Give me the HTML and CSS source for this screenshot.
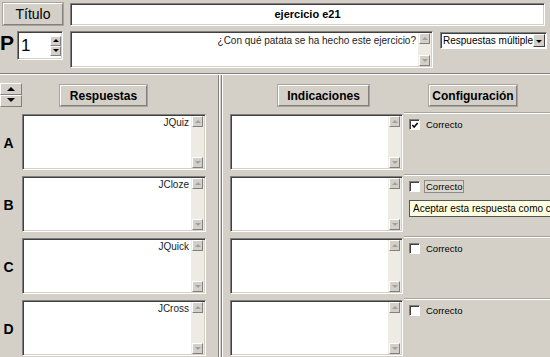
FILE: index.html
```html
<!DOCTYPE html>
<html lang="es">
<head>
	<meta charset="UTF-8">
	<title>Respuestas múltiples</title>
	<link rel="stylesheet" href="styles.css">
</head>
<body>
	<div class="win">
		<div class="top">
			<div class="line">
				<div class="btn btn-titulo">Título</div>
				<div class="field title-field">ejercicio e21</div>
			</div>
			<div class="line line2">
				<span class="plabel">P</span>
				<div class="field spin">
					<span class="spin-val">1</span>
					<span class="spin-btns"><i class="sp sp-up"></i><i class="sp sp-down"></i></span>
				</div>
				<div class="field area question">
					<div class="txt">¿Con qué patata se ha hecho este ejercicio?</div>
					<div class="sbar"><i class="sb sb-up"></i><i class="sb sb-down"></i></div>
				</div>
				<div class="combo">
					<span class="combo-txt">Respuestas múltiples</span>
					<span class="combo-btn"></span>
				</div>
			</div>
		</div>

		<div class="main">
			<div class="updown"><i class="ud ud-up"></i><i class="ud ud-down"></i></div>
			<div class="head"><span class="btn hbtn resp">Respuestas</span></div>
			<div class="divider"></div>
			<div class="head"><span class="btn hbtn indic">Indicaciones</span></div>
			<div class="head"><span class="btn hbtn conf">Configuración</span></div>

			<!-- A -->
			<div class="letter">A</div>
			<div class="field area answer">
				<div class="txt">JQuiz</div>
				<div class="sbar"><i class="sb sb-up"></i><i class="sb sb-down"></i></div>
			</div>
			<div class="field area hint">
				<div class="txt"></div>
				<div class="sbar"><i class="sb sb-up"></i><i class="sb sb-down"></i></div>
			</div>
			<div class="cfg">
				<span class="chk"><svg width="9" height="9" viewBox="0 0 9 9"><path d="M1.5 4 L3.5 6.2 L7.5 1.8" fill="none" stroke="#000" stroke-width="1.7"/></svg></span>
				<span class="chk-label">Correcto</span>
			</div>

			<!-- B -->
			<div class="letter">B</div>
			<div class="field area answer">
				<div class="txt">JCloze</div>
				<div class="sbar"><i class="sb sb-up"></i><i class="sb sb-down"></i></div>
			</div>
			<div class="field area hint">
				<div class="txt"></div>
				<div class="sbar"><i class="sb sb-up"></i><i class="sb sb-down"></i></div>
			</div>
			<div class="cfg">
				<span class="chk"></span>
				<span class="chk-label focus">Correcto</span>
				<div class="tooltip">Aceptar esta respuesta como correcta</div>
			</div>

			<!-- C -->
			<div class="letter">C</div>
			<div class="field area answer">
				<div class="txt">JQuick</div>
				<div class="sbar"><i class="sb sb-up"></i><i class="sb sb-down"></i></div>
			</div>
			<div class="field area hint">
				<div class="txt"></div>
				<div class="sbar"><i class="sb sb-up"></i><i class="sb sb-down"></i></div>
			</div>
			<div class="cfg">
				<span class="chk"></span>
				<span class="chk-label">Correcto</span>
			</div>

			<!-- D -->
			<div class="letter">D</div>
			<div class="field area answer">
				<div class="txt">JCross</div>
				<div class="sbar"><i class="sb sb-up"></i><i class="sb sb-down"></i></div>
			</div>
			<div class="field area hint">
				<div class="txt"></div>
				<div class="sbar"><i class="sb sb-up"></i><i class="sb sb-down"></i></div>
			</div>
			<div class="cfg">
				<span class="chk"></span>
				<span class="chk-label">Correcto</span>
			</div>
		</div>
	</div>
</body>
</html>
```

FILE: styles.css
```css
/* ventana 550 x 357 */
html, body {
	margin: 0;
	padding: 0;
	background: #d4d0c8;
}
.win {
	width: 550px;
	height: 357px;
	overflow: hidden;
	font-family: "Liberation Sans", Arial, sans-serif;
	color: #000;
}

/* piezas comunes */
.btn {
	display: flex;
	align-items: center;
	justify-content: center;
	box-sizing: border-box;
	background: #d4d0c8;
	border: 1px solid;
	border-color: #fff #808080 #808080 #fff;
	box-shadow: 0 0 0 1px #a9a59e;
}
.field {
	box-sizing: border-box;
	background: #fff;
	border: 1px solid;
	border-color: #808080 #fff #fff #808080;
	box-shadow: inset 1px 1px #404040, inset -1px -1px #d4d0c8;
}
.area {
	display: flex;
}
.area .txt {
	flex: 1;
	text-align: right;
	font-size: 10px;
	color: #222;
	padding: 2px 2px 0 0;
	white-space: nowrap;
	overflow: hidden;
}
.sbar {
	width: 13px;
	margin: 1px 1px 1px 0;
	background: #edebe4;
	display: flex;
	flex-direction: column;
	justify-content: space-between;
}
.sb {
	position: relative;
	display: block;
	width: 11px;
	height: 11px;
	margin-left: 1px;
	box-sizing: border-box;
	background: #d4d0c8;
	border: 1px solid;
	border-color: #fff #808080 #808080 #fff;
}
.sb::after {
	content: "";
	position: absolute;
	left: 2px;
	top: 3px;
	border-left: 3px solid transparent;
	border-right: 3px solid transparent;
}
.sb-up::after {
	border-bottom: 3px solid #a0a0a0;
}
.sb-down::after {
	border-top: 3px solid #a0a0a0;
}

/* zona superior */
.top {
	height: 73px;
	border-bottom: 1px solid #808080;
	box-sizing: content-box;
}
.line {
	display: flex;
	padding-top: 3px;
}
.btn-titulo {
	width: 60px;
	height: 22px;
	margin-left: 3px;
	font-size: 14px;
}
.title-field {
	width: 475px;
	height: 23px;
	margin-left: 7px;
	text-align: center;
	font-weight: bold;
	font-size: 11px;
	line-height: 20px;
}
.line2 {
	padding-top: 5px;
	align-items: flex-start;
}
.plabel {
	width: 17px;
	font-weight: bold;
	font-size: 21px;
	line-height: 24px;
}
.spin {
	width: 46px;
	height: 29px;
	display: flex;
	align-items: center;
	justify-content: space-between;
	padding: 0 1px 0 3px;
}
.spin-val {
	font-size: 17px;
	line-height: 20px;
}
.spin-btns {
	display: flex;
	flex-direction: column;
}
.sp {
	position: relative;
	display: block;
	width: 11px;
	height: 10px;
	box-sizing: border-box;
	background: #d4d0c8;
	border: 1px solid;
	border-color: #fff #808080 #808080 #fff;
}
.sp::after {
	content: "";
	position: absolute;
	left: 2px;
	top: 2px;
	border-left: 3px solid transparent;
	border-right: 3px solid transparent;
}
.sp-up::after { border-bottom: 3px solid #000; }
.sp-down::after { border-top: 3px solid #000; }

.question {
	width: 363px;
	height: 37px;
	margin-left: 7px;
}
.question .txt {
	padding-top: 3px;
}
.combo {
	display: flex;
	width: 107px;
	height: 17px;
	margin: 1px 0 0 7px;
	box-sizing: border-box;
	background: #fff;
	border: 1px solid;
	border-color: #808080 #fff #fff #808080;
	box-shadow: inset 1px 1px #404040;
}
.combo-txt {
	flex: 1;
	font-size: 10px;
	line-height: 15px;
	padding-left: 2px;
	overflow: hidden;
	white-space: nowrap;
}
.combo-btn {
	position: relative;
	width: 12px;
	margin: 1px 1px 1px 0;
	box-sizing: border-box;
	background: #d4d0c8;
	border: 1px solid;
	border-color: #fff #404040 #404040 #fff;
}
.combo-btn::after {
	content: "";
	position: absolute;
	left: 2px;
	top: 5px;
	border-left: 3px solid transparent;
	border-right: 3px solid transparent;
	border-top: 3px solid #000;
}

/* zona principal */
.main {
	border-top: 1px solid #fff;
	display: grid;
	grid-template-columns: 22px 196px 5px 181px 146px;
	grid-template-rows: 37px repeat(4, 62px);
}
.updown {
	margin-top: 8px;
	width: 22px;
	display: flex;
	flex-direction: column;
}
.ud {
	position: relative;
	display: block;
	height: 12px;
	box-sizing: border-box;
	background: #d4d0c8;
	border: 1px solid;
	border-color: #fff #808080 #808080 #fff;
}
.ud::after {
	content: "";
	position: absolute;
	left: 6px;
	top: 3px;
	border-left: 4px solid transparent;
	border-right: 4px solid transparent;
}
.ud-up::after { border-bottom: 4px solid #000; }
.ud-down::after { border-top: 4px solid #000; top: 2px; }

.head {
	padding-top: 10px;
	display: flex;
}
.hbtn {
	height: 21px;
	font-weight: bold;
	font-size: 12px;
}
.resp { width: 87px; margin-left: 38px; }
.indic { width: 91px; margin-left: 55px; }
.conf { width: 88px; margin-left: 25px; }

.divider {
	grid-column: 3;
	grid-row: 1 / span 5;
	border-left: 1px solid #808080;
	border-right: 1px solid #fff;
	box-shadow: inset 1px 0 #fff, inset -1px 0 #808080;
}
.letter {
	display: flex;
	align-items: center;
	justify-content: center;
	font-weight: bold;
	font-size: 14px;
	padding-right: 5px;
}
.answer {
	width: 184px;
	height: 56px;
	margin-top: 2px;
}
.hint {
	width: 173px;
	height: 56px;
	margin: 2px 0 0 7px;
}
.cfg {
	position: relative;
	display: flex;
	align-items: flex-start;
	border-top: 1px solid #a9a59e;
	box-shadow: inset 0 1px #fff;
	padding: 6px 0 0 5px;
	margin-bottom: 1px;
}
.chk {
	display: flex;
	align-items: center;
	justify-content: center;
	width: 11px;
	height: 11px;
	box-sizing: border-box;
	background: #fff;
	border: 1px solid;
	border-color: #808080 #fff #fff #808080;
	box-shadow: inset 1px 1px #404040;
}
.chk svg {
	margin: 1px 0 0 1px;
}
.chk-label {
	font-size: 9.5px;
	line-height: 11px;
	margin-left: 4px;
	padding: 0 1px;
	border: 1px solid transparent;
	margin-top: -1px;
}
.chk-label.focus {
	border-color: #8c8c8c;
	background: #dcd8d0;
}
.tooltip {
	position: absolute;
	left: 5px;
	top: 25px;
	height: 15px;
	padding: 0 3px;
	background: #ffffe1;
	border: 1px solid #555;
	font-size: 10px;
	line-height: 15px;
	white-space: nowrap;
}
```
